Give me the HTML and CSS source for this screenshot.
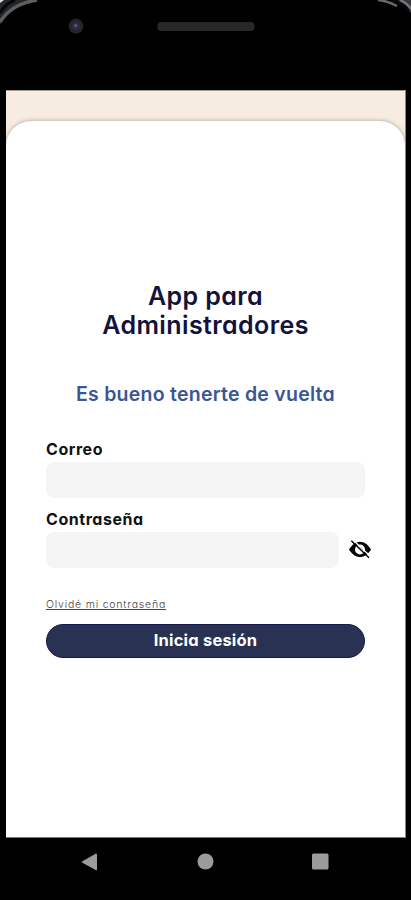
FILE: index.html
```html
<!DOCTYPE html>
<html lang="es">
<head>
<meta charset="utf-8">
<title>App para Administradores</title>
<link rel="stylesheet" href="styles.css">
</head>
<body>
<div class="phone">
  <header class="bezel">
    <svg width="411" height="90" viewBox="0 0 411 90" fill="none" aria-hidden="true">
      <path d="M0 0H37Q12 3 0 25Z" fill="#252627"/>
      <path d="M0 22Q11 4 37 0" stroke="#5c5f61" stroke-width="3.500"/>
      <path d="M0 13Q5 4 15 0" stroke="#070707" stroke-width="3"/>
      <path d="M0 0H4L0 3Z" fill="#ddd"/>
      <path d="M384 0H411V13Q406 5 397 0Z" fill="#39393d"/>
      <path d="M378 0Q388 1 397 6" stroke="#68686c" stroke-width="2.500"/>
      <path d="M391 0Q402 2 409 10" stroke="#0a0a0b" stroke-width="3"/>
      <path d="M400 0Q407 3 411 9" stroke="#75757c" stroke-width="2.500"/>
      <circle cx="76" cy="26" r="7.400" fill="#242429"/>
      <circle cx="76" cy="26" r="4.400" fill="#2d2b43"/>
      <circle cx="75.600" cy="25.400" r="1.500" fill="#5b5985"/>
      <rect x="157.500" y="22" width="97" height="9" rx="4" fill="#282828"/>
    </svg>
  </header>
  <main class="screen">
    <section class="sheet">
      <h1>App para<br>Administradores</h1>
      <p class="welcome">Es bueno tenerte de vuelta</p>
      <form class="form">
        <label class="label mail" for="mail">Correo</label>
        <input class="field" id="mail" type="text">
        <label class="label pass" for="pass">Contraseña</label>
        <div class="row">
          <input class="field" id="pass" type="password">
          <svg class="eye" width="24" height="20" viewBox="0 0 24 20" aria-hidden="true">
            <path d="M1 9.500C4 4.500 8 1.800 12 1.800S20 4.500 23 9.500C20 14.500 16 17 12 17S4 14.500 1 9.500Z" fill="#050505"/>
            <circle cx="12" cy="9.500" r="5" fill="#fff"/>
            <path d="M11 6.500Q15 6.300 15 10.500Z" fill="#050505"/>
            <path d="M4.600 -.4L22.600 16.400" stroke="#fff" stroke-width="1.300"/>
            <path d="M3.300 .7L21 17.700" stroke="#050505" stroke-width="1.500"/>
          </svg>
        </div>
        <a class="forgot">Olvidé mi contraseña</a>
        <button class="submit" type="button">Inicia sesión</button>
      </form>
    </section>
  </main>
  <nav class="nav">
    <svg width="411" height="62" viewBox="0 0 411 62" fill="#9b9b9b" aria-hidden="true">
      <path d="M82 23.500L96 15.500Q97 15.500 97 16.500V31.500Q97 32.500 96 32.200L82 24.500Z"/>
      <circle cx="205.500" cy="23.500" r="8"/>
      <rect x="312" y="15.500" width="16.500" height="16" rx="1.500"/>
    </svg>
  </nav>
</div>
</body>
</html>
```
FILE: styles.css
```css
* { box-sizing: border-box; }
body {
  margin: 0;
  background: #000;
  font-family: Inter, "Open Sans", sans-serif;
  font-feature-settings: "cv11";
}
.phone {
  width: 411px;
  height: 900px;
  display: flex;
  flex-direction: column;
  overflow: hidden;
}
.bezel { height: 90px; }
.bezel svg, .nav svg { display: block; }
.screen {
  height: 748px;
  margin: 0 5px 0 6px;
  padding-top: 30px;
  background: #f6ece2;
  border-top: 1px solid #a19a95;
  border-right: 1px solid #888;
  border-bottom: 1px solid #777;
  overflow: hidden;
}
.sheet {
  height: 717px;
  padding: 161px 40px 0;
  background: #fff;
  border-radius: 25px 25px 0 0;
  box-shadow: 0 0 4px #a99e95;
  text-align: center;
}
h1 {
  margin: 0;
  color: #12123c;
  font-size: 25px;
  line-height: 29px;
  font-weight: 600;
  letter-spacing: .4px;
}
.welcome {
  margin: 41px 0 0;
  color: #3c5593;
  font-size: 19.5px;
  line-height: 26px;
  font-weight: 600;
  letter-spacing: .25px;
  white-space: nowrap;
}
.form {
  display: flex;
  flex-direction: column;
  align-items: flex-start;
}
.label {
  color: #111;
  font-size: 16px;
  line-height: 20px;
  font-weight: 700;
  letter-spacing: .55px;
}
.mail { margin-top: 32px; }
.pass { margin-top: 11px; }
.field {
  width: 319px;
  height: 36px;
  margin-top: 3px;
  padding: 0 12px;
  border: 0;
  border-radius: 8px;
  background: #f5f5f5;
}
.row {
  display: flex;
  align-items: center;
  gap: 9px;
}
.row .field { width: 293px; }
.eye {
  flex: none;
  margin-top: 3px;
}
.forgot {
  margin-top: 29px;
  color: #444;
  font-size: 10.5px;
  line-height: 16px;
  font-weight: 300;
  letter-spacing: .8px;
  text-decoration: underline;
}
.submit {
  width: 319px;
  height: 34px;
  margin-top: 11px;
  padding: 0 0 2px;
  border: 1px solid #171a4b;
  border-radius: 17px;
  background: #293253;
  color: #fff;
  font: 700 16.5px/30px Inter, sans-serif;
  font-feature-settings: "cv11";
  letter-spacing: .2px;
}
.nav { height: 62px; }
```
